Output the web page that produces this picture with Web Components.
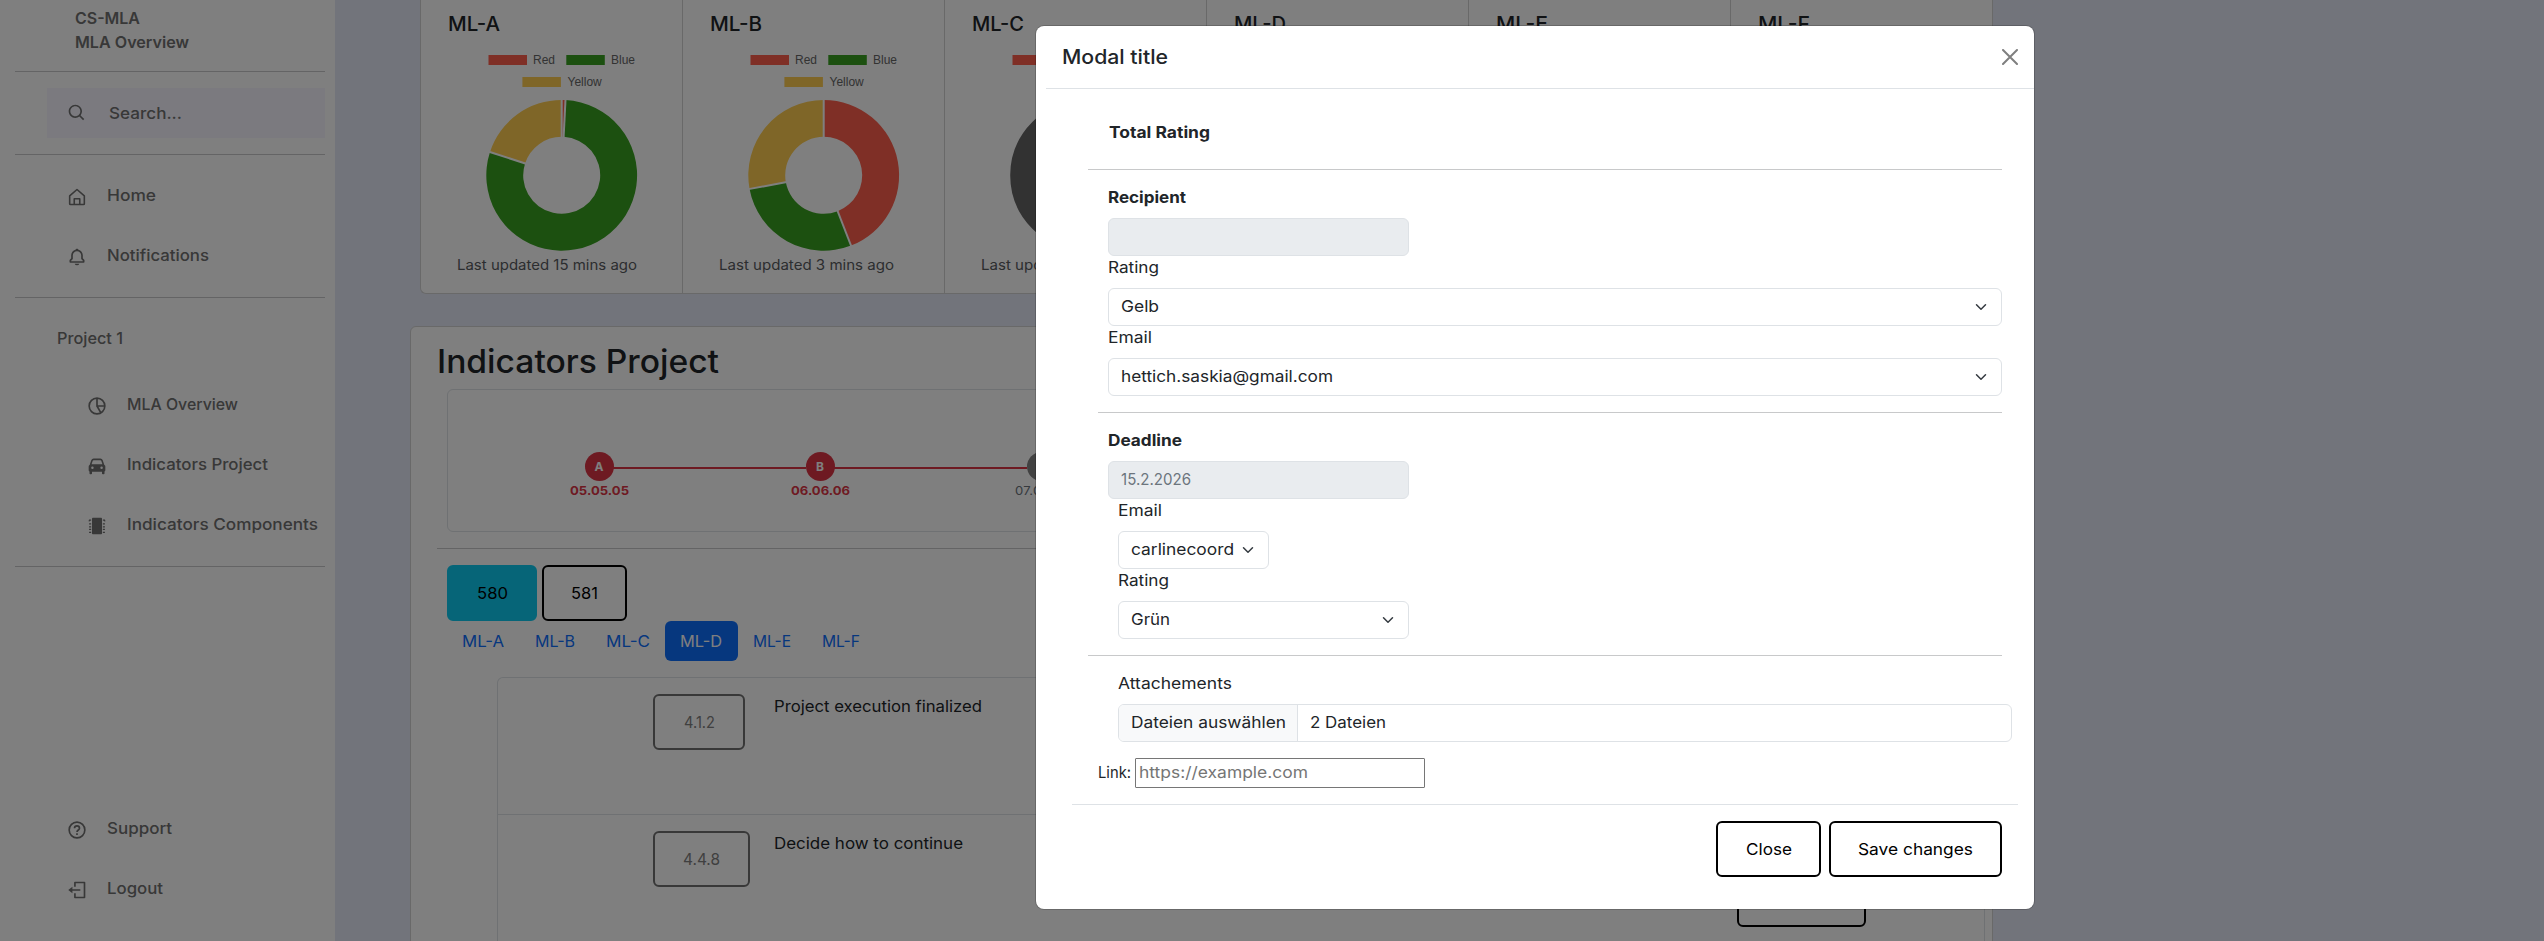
<!DOCTYPE html>
<html lang="en">
<head>
<meta charset="utf-8">
<title>CS-MLA</title>
<style>
html,body{margin:0;height:941px;overflow:hidden;background:#e4e9f7}
body{font:16px/24px Inter,"Noto Sans",sans-serif;color:#212529}
</style>
</head>
<body>
<mla-app></mla-app>
<script>
const def=(name,html,setup)=>customElements.define(name,class extends HTMLElement{
  connectedCallback(){
    if(this.shadowRoot)return;
    const t=document.createElement('template');
    t.innerHTML=typeof html==='function'?html(this):html;
    this.attachShadow({mode:'open'}).append(t.content.cloneNode(true));
    if(setup)setup(this);
  }
});

/* Single line of text widened to fill the width given in "w". */
def('fit-text','<style>:host{display:block;white-space:nowrap;flex:none}span{display:inline-block;transform-origin:0 50%}</style><span><slot></slot></span>',el=>{
  const w=+el.getAttribute('w'),s=el.shadowRoot.querySelector('span');
  el.style.width=w+'px';
  const k=w/s.getBoundingClientRect().width,n=el.textContent.length;
  /* Most of the difference widens the letters, anything above 9% goes between them. */
  const sx=Math.min(k,1.09);
  s.style.letterSpacing=((w/sx-s.getBoundingClientRect().width)/n).toFixed(3)+'px';
  s.style.transform=`scaleX(${sx.toFixed(4)})`;
});

def('rule-line','<style>:host{display:block;height:1px;background:#c8c9ca;flex:none}</style>');

const ICONS={
 search:'<path fill="currentColor" d="M10 18a7.952 7.952 0 0 0 4.897-1.688l4.396 4.396 1.414-1.414-4.396-4.396A7.952 7.952 0 0 0 18 10c0-4.411-3.589-8-8-8s-8 3.589-8 8 3.589 8 8 8zm0-14c3.309 0 6 2.691 6 6s-2.691 6-6 6-6-2.691-6-6 2.691-6 6-6z"/>',
 home:'<path fill="none" stroke="currentColor" stroke-width="1.900" stroke-linejoin="round" d="M3.200 10.700 12 3l8.800 7.700v9.300a1 1 0 0 1-1 1H4.200a1 1 0 0 1-1-1zM8.700 21v-7h6.600v7"/>',
 bell:'<path fill="currentColor" d="M19 13.586V10c0-3.217-2.185-5.927-5.145-6.742C13.562 2.520 12.846 2 12 2s-1.562.520-1.855 1.258C7.184 4.073 5 6.783 5 10v3.586l-1.707 1.707A.996.996 0 0 0 3 16v2a1 1 0 0 0 1 1h16a1 1 0 0 0 1-1v-2a.996.996 0 0 0-.293-.707L19 13.586zM19 17H5v-.586l1.707-1.707A.996.996 0 0 0 7 14v-4c0-2.757 2.243-5 5-5s5 2.243 5 5v4c0 .266.105.520.293.707L19 16.414V17zm-7 5a2.980 2.980 0 0 0 2.818-2H9.182A2.980 2.980 0 0 0 12 22z"/>',
 pie:'<g fill="none" stroke="currentColor" stroke-width="2"><circle cx="12" cy="12" r="9.400"/><path d="M12 3v9h9M12 12l4.500 8"/></g>',
 car:'<path fill="currentColor" fill-rule="evenodd" d="m20.800 10.700-1.900-5.600A3 3 0 0 0 16.100 3H7.900a3 3 0 0 0-2.800 2.100l-1.900 5.600A2 2 0 0 0 2 12.500V17c0 .700.400 1.300 1 1.700V21a1 1 0 0 0 1 1h1a1 1 0 0 0 1-1v-2h12v2a1 1 0 0 0 1 1h1a1 1 0 0 0 1-1v-2.300c.600-.400 1-1 1-1.700v-4.500a2 2 0 0 0-1.200-1.800zM7.900 5h8.200c.400 0 .800.300 1 .700l1.400 4.300h-13l1.400-4.300c.200-.400.600-.700 1-.700zM6.500 15.500a1.500 1.500 0 1 1 0-3 1.500 1.500 0 0 1 0 3zm11 0a1.500 1.500 0 1 1 0-3 1.500 1.500 0 0 1 0 3z"/>',
 chip:'<path fill="currentColor" d="M7 2h10a1 1 0 0 1 1 1v18a1 1 0 0 1-1 1H7a1 1 0 0 1-1-1V3a1 1 0 0 1 1-1z"/><path stroke="currentColor" stroke-width="1.500" d="M2.500 6.500 3 5h2M2.500 9.500H5M2.500 13H5M2.500 16H5M2.500 19.500H5M21.500 6.500 21 5h-2M21.500 9.500H19M21.500 13H19M21.500 16H19M21.500 19.500H19" fill="none"/>',
 help:'<g fill="none" stroke="currentColor" stroke-width="2"><circle cx="12" cy="12" r="9.400"/><path d="M9 10c0-1.700 1.300-3 3-3s3 1.300 3 2.900c0 2-3 2.200-3 4.600"/></g><path fill="currentColor" d="M11 16h2v2h-2z"/>',
 logout:'<path fill="none" stroke="currentColor" stroke-width="2" stroke-linejoin="round" d="M9.500 8V3H21v18H9.500v-5"/><path fill="currentColor" d="m1.500 12 5-4v3H16v2H6.500v3z"/>',
 chevron:'<path fill="none" stroke="#343a40" stroke-width="3" stroke-linecap="round" stroke-linejoin="round" d="m3 7.500 9 9 9-9"/>',
 close:'<path fill="none" stroke="#7f7f7f" stroke-width="3" stroke-linecap="round" d="m1.500 1.500 21 21m0-21-21 21"/>'
};
def('ui-icon',el=>`<style>:host{display:block;width:20px;height:20px;flex:none}svg{display:block;width:100%;height:100%}</style><svg viewBox="0 0 24 24">${ICONS[el.getAttribute('name')]}</svg>`);

def('nav-item',el=>`<style>:host{display:flex;align-items:center;height:60px;font-weight:500;padding-left:67px}
:host([sub]){padding-left:87px}ui-icon{margin:1px 20px 0 0}::slotted(fit-text){margin-bottom:2px}</style><ui-icon name="${el.getAttribute('icon')}"></ui-icon><slot></slot>`);

def('app-sidebar',`<style>
:host{display:block;width:335px;height:941px;background:#fff;color:#707070;font-weight:500}
rule-line{margin:0 10px 0 15px}
.brand{padding:6px 0 0 75px;font-weight:600;height:65px}
.search{margin:16px 10px 16px 47px;height:50px;background:#f6f5ff;display:flex;align-items:center}
.search ui-icon{margin:0 22px 0 20px}
.proj{margin:28px 0 0 57px;height:27px}
</style>
<div class="brand"><fit-text w="65">CS-MLA</fit-text><fit-text w="114">MLA Overview</fit-text></div>
<rule-line></rule-line>
<div class="search"><ui-icon name="search"></ui-icon><fit-text w="73">Search...</fit-text></div>
<rule-line></rule-line>
<div style="padding:11px 0;height:120px"><nav-item icon="home"><fit-text w="49">Home</fit-text></nav-item><nav-item icon="bell"><fit-text w="102">Notifications</fit-text></nav-item></div>
<rule-line></rule-line>
<div class="proj"><fit-text w="66">Project 1</fit-text></div>
<div style="margin-top:22px;height:191px"><nav-item sub icon="pie"><fit-text w="111">MLA Overview</fit-text></nav-item><nav-item sub icon="car"><fit-text w="141">Indicators Project</fit-text></nav-item><nav-item sub icon="chip"><fit-text w="191">Indicators Components</fit-text></nav-item></div>
<rule-line></rule-line>
<div style="margin-top:232px"><nav-item icon="help"><fit-text w="65">Support</fit-text></nav-item><nav-item icon="logout"><fit-text w="56">Logout</fit-text></nav-item></div>`);

/* Doughnut chart with its legend. "parts" lists the end of each slice in percent. */
const donut=parts=>{
  const cols=['#ff5f4c','#38a120','#ffcc50'],cx=140.7,cy=135.3,R=75.4,r=38.500;
  const p=(a,d)=>{const t=a/100*2*Math.PI;return (cx+d*Math.sin(t)).toFixed(2)+' '+(cy-d*Math.cos(t)).toFixed(2)};
  if(!parts)return `<circle cx="${cx}" cy="${cy}" r="57" fill="none" stroke="#646464" stroke-width="37"/>`;
  let a=0,out='';
  parts.forEach((b,i)=>{const l=b-a>50?1:0;
    out+=`<path fill="${cols[i]}" d="M${p(a,R)}A${R} ${R} 0 ${l} 1 ${p(b,R)}L${p(b,r)}A${r} ${r} 0 ${l} 0 ${p(a,r)}Z"/>`;a=b});
  parts.forEach(b=>{const [x,y]=p(b,r-1).split(' '),[u,v]=p(b,R+1).split(' ');out+=`<path stroke="#fff" stroke-width="2" d="M${x} ${y}L${u} ${v}"/>`});
  return out;
};
def('chart-card',el=>{const parts=el.getAttribute('parts'),ago=el.getAttribute('ago');return `<style>
:host{display:block;box-sizing:border-box;border-right:1px solid #d2d2d2;padding-top:12px}
h5{margin:0 0 0 27px;font-size:20px;font-weight:500;height:28px}
svg{display:block;height:213px;width:261px;font:12px "Liberation Sans",Arial,sans-serif}
.foot{font-size:14px;line-height:24px;color:#585b5e;margin-left:36px}
</style>
<h5><fit-text w="52">${el.getAttribute('name')}</fit-text></h5>
<svg viewBox="0 0 261 213">
<path fill="#ff5f4c" d="M67.500 15h38.500v10h-38.500z"/><path fill="#38a120" d="M145.300 15h38.500v10h-38.500z"/><path fill="#ffcc50" d="M101.400 37h38.500v10h-38.500z"/>
${parts?'<g fill="#666"><text x="112" y="23.500">Red</text><text x="190" y="23.500">Blue</text><text x="146.500" y="45.500">Yellow</text></g>':''}
${donut(parts&&parts.split(',').map(Number))}</svg>
${ago?`<div class="foot"><fit-text w="${el.getAttribute('w')}">Last updated ${ago} mins ago</fit-text></div>`:''}`});

def('ui-button',`<style>:host{display:flex;align-items:center;justify-content:center;box-sizing:border-box;height:56px;border:2px solid #000;border-radius:6px;color:#000;flex:none}
:host([muted]){border-color:#707070;color:#808080}::slotted(fit-text){margin-bottom:1px}
:host([info]){background:#0dcaf0;border-color:#0dcaf0}</style><slot></slot>`);

def('mile-stone',`<style>:host{display:flex;flex-direction:column;align-items:center;width:70px;font:700 12px/18px Inter,sans-serif;color:#dc3545;flex:none}
i{display:flex;align-items:center;justify-content:center;width:29px;height:29px;border-radius:50%;background:currentColor;margin-bottom:1px}
i span{font-style:normal;color:#fff;font-size:12px}
:host([off]){color:#6c757d;font-weight:400}:host([off]) i{background:#848484}
</style><i><span><slot name="mark"></slot></span></i><slot></slot>`);

def('tab-link',`<style>:host{display:flex;align-items:center;height:40px;padding:0 16px 0 15px;border-radius:6px;color:#0d6efd}
:host([on]){background:#0d6efd;color:#fff}::slotted(fit-text){margin-bottom:1px}</style><slot></slot>`);

def('task-row',`<style>:host{display:flex;box-sizing:border-box;height:137px;border-bottom:1px solid #dee2e6;padding:16px 0 0 155px}
.b{width:121px}</style><div class="b"><slot name="code"></slot></div><slot></slot>`);

def('project-panel',`<style>
:host{display:block;box-sizing:border-box;width:1583px;height:640px;margin:32px 0 0 75px;background:#fff;border:1px solid #d2d2d2;border-radius:6px;padding-left:26px}
h2{margin:0;padding:15px 0 0 0;font-size:32px;font-weight:500;line-height:40px;height:47px}
.track{margin-left:10px;width:1528px;height:143px;box-sizing:border-box;border:1px solid #dee2e6;border-radius:6px;display:flex;align-items:flex-start;padding:62px 0 0 116px}
.bar{height:2px;background:#dc3545;margin:15px -21px 0;width:193px;flex:none}
.row{display:flex;margin-left:10px}
.list{margin:16px 0 0 60px;width:1488px;height:300px;box-sizing:border-box;border:1px solid #dee2e6;border-bottom:0;border-radius:6px 6px 0 0}
</style>
<h2><fit-text w="282">Indicators Project</fit-text></h2>
<div class="track"><mile-stone><span slot="mark">A</span><fit-text w="59">05.05.05</fit-text></mile-stone><div class="bar"></div>
<mile-stone><span slot="mark">B</span><fit-text w="59">06.06.06</fit-text></mile-stone><div class="bar"></div>
<mile-stone off><span slot="mark">C</span><fit-text w="52">07.07.07</fit-text></mile-stone></div>
<rule-line style="margin-top:16px;width:1545px"></rule-line>
<div class="row" style="margin-top:16px;gap:5px"><ui-button info style="width:90px"><fit-text w="31">580</fit-text></ui-button><ui-button style="width:85px"><fit-text w="27">581</fit-text></ui-button></div>
<div class="row"><tab-link><fit-text w="42">ML-A</fit-text></tab-link><tab-link><fit-text w="40">ML-B</fit-text></tab-link><tab-link style="padding-right:15px"><fit-text w="44">ML-C</fit-text></tab-link><tab-link on><fit-text w="42">ML-D</fit-text></tab-link><tab-link><fit-text w="38">ML-E</fit-text></tab-link><tab-link><fit-text w="38">ML-F</fit-text></tab-link></div>
<div class="list">
<task-row><ui-button slot="code" muted style="width:92px"><fit-text w="31">4.1.2</fit-text></ui-button><fit-text w="208">Project execution finalized</fit-text></task-row>
<task-row><ui-button slot="code" muted style="width:97px"><fit-text w="37">4.4.8</fit-text></ui-button><fit-text w="189">Decide how to continue</fit-text><ui-button style="width:129px;margin:40px 0 0 774px"></ui-button></task-row>
</div>`);

def('form-field',`<style>:host{display:flex;align-items:center;box-sizing:border-box;height:38px;border:1px solid #dee2e6;border-radius:6px;padding:0 12px;background:#fff}
:host([disabled]){background:#e9ecef;color:#6c757d}
ui-icon{display:none;width:12px;height:12px;margin-left:auto;margin-right:2px}:host([select]) ui-icon{display:block}</style><slot></slot><ui-icon name="chevron"></ui-icon>`);

def('rating-modal',`<style>
:host{display:block;position:absolute;left:1036px;top:26px;width:998px;height:883px;box-sizing:border-box;background:#fff;border-radius:8px;box-shadow:0 0 0 1px #0000002d}
header{display:flex;align-items:center;justify-content:space-between;height:62px;padding:0 16px 0 26px;font-size:20px;font-weight:500}
header ui-icon{width:16px;height:16px}
.light{background:#dee2e6}
b{display:block;font-weight:700;line-height:23px}
.f{margin-left:72px}.g{margin-left:82px}
form-field{width:894px}
form-field fit-text{margin-bottom:2px}
label{display:block;height:32px;line-height:22px}
.file{padding-left:0;overflow:hidden}
.file .btn{display:flex;align-items:center;box-sizing:border-box;height:36px;width:179px;padding-left:12px;background:#f8f9fa;border-right:1px solid #dee2e6;margin-right:12px}
.link{display:flex;align-items:center;margin:16px 0 0 62px;height:30px}
.link>fit-text{margin-bottom:2px}
.url{box-sizing:border-box;width:290px;height:30px;margin-left:4px;border:1px solid #767676;border-radius:1px;padding:1px 3px;color:#757575}
footer{display:flex;gap:8px;padding:16px 32px 0 0;justify-content:flex-end}
</style>
<header><fit-text w="106">Modal title</fit-text><ui-icon name="close"></ui-icon></header>
<rule-line class="light" style="margin-left:10px"></rule-line>
<b style="margin:32px 0 0 73px;height:48px"><fit-text w="101">Total Rating</fit-text></b>
<rule-line style="margin:0 32px 0 52px"></rule-line>
<b class="f" style="margin-top:16px;height:32px"><fit-text w="78">Recipient</fit-text></b>
<form-field class="f" disabled style="width:301px"></form-field>
<label class="f"><fit-text w="51">Rating</fit-text></label>
<form-field class="f" select><fit-text w="38">Gelb</fit-text></form-field>
<label class="f"><fit-text w="44">Email</fit-text></label>
<form-field class="f" select><fit-text w="212">hettich.saskia@gmail.com</fit-text></form-field>
<rule-line style="margin:16px 32px 0 62px"></rule-line>
<b class="f" style="margin-top:16px;height:32px"><fit-text w="74">Deadline</fit-text></b>
<form-field class="f" disabled style="width:301px"><fit-text w="70">15.2.2026</fit-text></form-field>
<label class="g"><fit-text w="44">Email</fit-text></label>
<form-field class="g" select style="width:151px"><fit-text w="103">carlinecoord</fit-text></form-field>
<label class="g"><fit-text w="51">Rating</fit-text></label>
<form-field class="g" select style="width:291px"><fit-text w="39">Grün</fit-text></form-field>
<rule-line style="margin:16px 32px 0 52px"></rule-line>
<label class="g" style="margin-top:16px"><fit-text w="114">Attachements</fit-text></label>
<form-field class="g file"><div class="btn"><fit-text w="155">Dateien auswählen</fit-text></div><fit-text w="76">2 Dateien</fit-text></form-field>
<div class="link"><fit-text w="33">Link:</fit-text><div class="url"><fit-text w="169">https://example.com</fit-text></div></div>
<rule-line class="light" style="margin:16px 16px 0 36px"></rule-line>
<footer><ui-button style="width:105px"><fit-text w="46">Close</fit-text></ui-button><ui-button style="width:173px"><fit-text w="115">Save changes</fit-text></ui-button></footer>`);

def('mla-app',`<style>
:host{display:grid;grid-template-columns:335px 1fr;width:2544px;height:941px;overflow:hidden;position:relative}
.cards{display:grid;grid-template-columns:repeat(6,262px);margin-left:85px;width:1573px;height:294px;box-sizing:border-box;background:#fff;border:1px solid #d2d2d2;border-top:0;border-right:0;border-radius:0 0 6px 6px}
.shade{position:absolute;inset:0;background:#00000080}
</style>
<app-sidebar></app-sidebar>
<main><div class="cards">
<chart-card name="ML-A" parts="0.8,80,100" ago="15" w="180"></chart-card>
<chart-card name="ML-B" parts="44.1,72.1,100" ago="3" w="175"></chart-card>
<chart-card name="ML-C" ago="3" w="175"></chart-card>
<chart-card name="ML-D"></chart-card>
<chart-card name="ML-E"></chart-card>
<chart-card name="ML-F"></chart-card>
</div><project-panel></project-panel></main>
<div class="shade"></div><rating-modal></rating-modal>`);
</script>
</body>
</html>
